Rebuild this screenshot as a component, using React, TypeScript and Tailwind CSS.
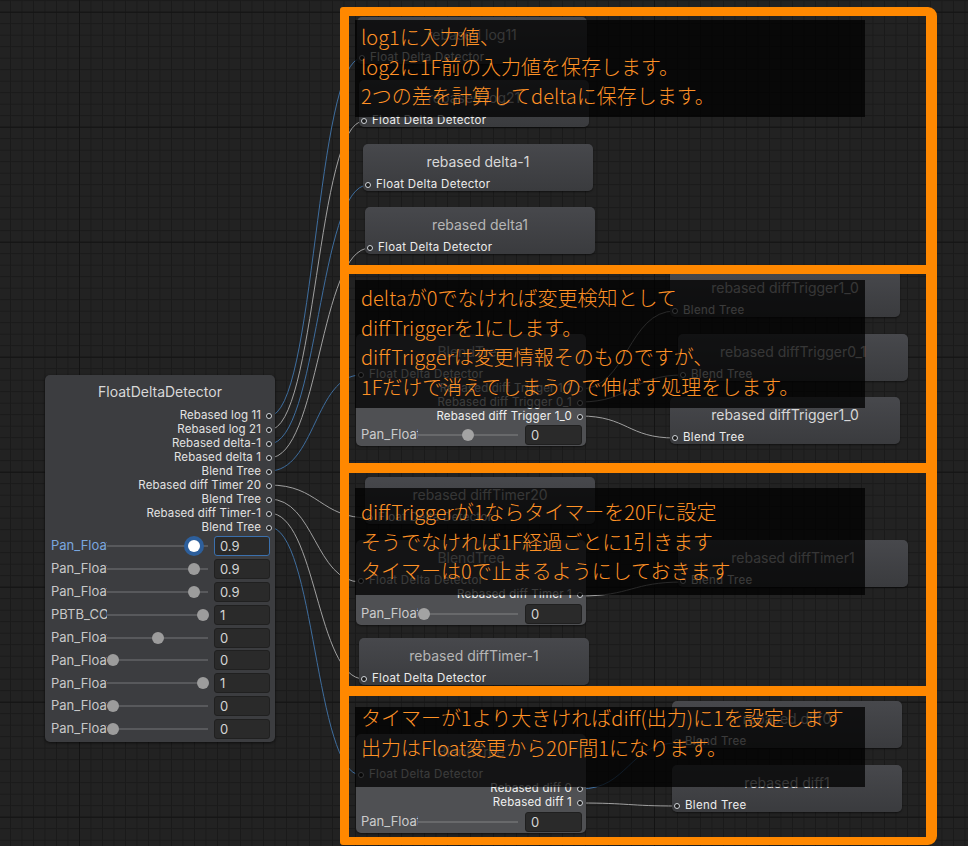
import React from "react"

type P = [number, number]

const BLUE = "#3e6d9e"
const GRAY = "#a0a0a0"

// bezier between two ports, same as the graph view draws them
const curve = (a: P, b: P) => {
  const d = Math.max(30, Math.abs(b[0] - a[0]) * 0.5)
  return `M${a[0]} ${a[1]} C${a[0] + d} ${a[1]} ${b[0] - d} ${b[1]} ${b[0]} ${b[1]}`
}

const wires: { a: P; b: P; c: string }[] = [
  { a: [269, 416], b: [362, 58], c: BLUE },
  { a: [269, 430], b: [364, 121], c: GRAY },
  { a: [269, 444], b: [368, 185], c: BLUE },
  { a: [269, 458], b: [370, 248], c: GRAY },
  { a: [269, 471], b: [361, 375], c: BLUE },
  { a: [269, 485], b: [370, 518], c: GRAY },
  { a: [269, 499], b: [361, 582], c: GRAY },
  { a: [269, 513], b: [364, 679], c: GRAY },
  { a: [269, 527], b: [361, 775], c: BLUE },
  { a: [580, 389], b: [675, 311], c: GRAY },
  { a: [580, 402], b: [683, 375], c: GRAY },
  { a: [580, 416], b: [675, 438], c: GRAY },
  { a: [580, 596], b: [683, 582], c: GRAY },
  { a: [580, 789], b: [677, 743], c: BLUE },
  { a: [580, 803], b: [677, 806], c: GRAY },
]

const Dot = () => (
  <span className="w-[6px] h-[6px] shrink-0 rounded-full border border-[#cfd3d8] bg-[#1b1b1b]" />
)

const Target = ({ pos, title, port, dim }: { pos: string; title: string; port: string; dim?: boolean }) => (
  <div className={`absolute ${pos} w-[230px] h-[47px] rounded-[5px] bg-linear-to-b from-[#47484c] to-[#3a3b3e] shadow-[0_1px_2px_rgba(0,0,0,0.5)] flex flex-col`}>
    <div className={`h-[34px] flex items-center justify-center text-[14px] ${dim ? "text-[#b6b6b6]" : "text-[#d8d8d8]"}`}>
      {title}
    </div>
    <div className="h-[13px] flex items-center gap-[5px] pl-[2px] text-[11.5px] tracking-[0.3px] text-[#ececec]">
      <Dot />
      <span>{port}</span>
    </div>
  </div>
)

const Blend = ({ pos, outs, knob, gap }: { pos: string; outs: string[]; knob?: number; gap: string }) => (
  <div className={`absolute ${pos} w-[230px] rounded-[5px] bg-[#4f5053] shadow-[0_1px_2px_rgba(0,0,0,0.5)] flex flex-col pb-[1px]`}>
    <div className="h-[34px] flex items-center justify-center text-[14px] text-[#d8d8d8]">BlendTree</div>
    <div className="h-[14px] flex items-center gap-[5px] pl-[2px] text-[11.5px] tracking-[0.3px] text-[#ececec]">
      <Dot />
      <span>Float Delta Detector</span>
    </div>
    {outs.map((o, i) => (
      <div key={i} className="h-[14px] flex items-center justify-end gap-[5px] pr-[3px] text-[11.5px] tracking-[0.2px] text-[#f0f0f0]">
        <span>{o}</span>
        <Dot />
      </div>
    ))}
    <div className={`${gap} h-[20px] flex items-center pl-[5px] pr-[4px]`}>
      <div className="w-[57px] overflow-hidden whitespace-nowrap text-[13px] text-[#cbcbcb]">Pan_FloatDelta</div>
      <div className="relative w-[100px] h-[20px]">
        <div className="absolute left-0 right-0 top-[9px] h-[2px] bg-[#68696b]" />
        {knob !== undefined && (
          <div
            className="absolute top-[4px] w-[12px] h-[12px] rounded-full bg-[#a3a3a3]"
            style={{ left: 6 + knob * 88 - 6 }}
          />
        )}
      </div>
      <div className="ml-[7px] w-[57px] h-[20px] rounded-[3px] bg-[#2a2a2a] border border-[#1f1f1f] px-[5px] text-[13px] leading-[18px] text-[#d4d4d4]">
        0
      </div>
    </div>
  </div>
)

const params = [
  { label: "Pan_FloatDelta", v: "0.9", k: 0.9, focus: true },
  { label: "Pan_FloatDelta", v: "0.9", k: 0.9 },
  { label: "Pan_FloatDelta", v: "0.9", k: 0.9 },
  { label: "PBTB_CONST", v: "1", k: 1 },
  { label: "Pan_FloatDelta", v: "0", k: 0.5 },
  { label: "Pan_FloatDelta", v: "0", k: 0 },
  { label: "Pan_FloatDelta", v: "1", k: 1 },
  { label: "Pan_FloatDelta", v: "0", k: 0 },
  { label: "Pan_FloatDelta", v: "0", k: 0 },
]

const outputs = [
  "Rebased log 11",
  "Rebased log 21",
  "Rebased delta-1",
  "Rebased delta 1",
  "Blend Tree",
  "Rebased diff Timer 20",
  "Blend Tree",
  "Rebased diff Timer-1",
  "Blend Tree",
]

const Note = ({ pos, lines, inner }: { pos: string; lines: string[]; inner: string }) => (
  <div className={`absolute ${pos} w-[510px] bg-black/75 pl-[6px] whitespace-nowrap`}>
    <div className={`${inner} font-['Noto_Sans_CJK_JP',sans-serif] font-light text-[20px] leading-[29.6px] text-[#ff9226]`}>
      {lines.map((l) => (
        <div key={l}>{l}</div>
      ))}
    </div>
  </div>
)

export default function App() {
  return (
    <div className="relative w-[968px] h-[846px] overflow-hidden bg-[#222222] font-['Inter',sans-serif]">
      <svg className="absolute inset-0" width={968} height={846}>
        <defs>
          <pattern id="minor" width="11.5" height="11.5" patternUnits="userSpaceOnUse" x="79" y="11.7">
            <rect width="11.5" height="1" fill="#1a1a1a" />
            <rect width="1" height="11.5" fill="#1a1a1a" />
          </pattern>
          <pattern id="major" width="115" height="115" patternUnits="userSpaceOnUse" x="79" y="11.7">
            <rect width="115" height="1" fill="#131313" />
            <rect width="1" height="115" fill="#131313" />
          </pattern>
        </defs>
        <rect width="968" height="846" fill="url(#minor)" />
        <rect width="968" height="846" fill="url(#major)" />
        {wires.map((w, i) => (
          <path key={i} d={curve(w.a, w.b)} fill="none" stroke={w.c} strokeWidth={1} />
        ))}
      </svg>

      {/* left node */}
      <div className="absolute left-[45px] top-[375px] w-[230px] h-[367px] rounded-[5px] bg-[#3c3d40] shadow-[0_1px_3px_rgba(0,0,0,0.6)] flex flex-col">
        <div className="h-[32px] flex items-center justify-center text-[14px] text-[#d8d8d8]">FloatDeltaDetector</div>
        <div className="pt-[2px] flex flex-col">
          {outputs.map((o, i) => (
            <div key={i} className="h-[14px] flex items-center justify-end gap-[5px] pr-[3px] text-[11.5px] tracking-[0.1px] text-[#e2e2e2]">
              <span>{o}</span>
              <Dot />
            </div>
          ))}
        </div>
        <div className="mt-[1px] flex flex-col gap-[2.875px]">
          {params.map((p, i) => (
            <div key={i} className="h-[20px] flex items-center pl-[6px] pr-[5px]">
              <div
                className={`w-[56px] overflow-hidden whitespace-nowrap text-[13px] ${p.focus ? "text-[#7aa6de]" : "text-[#c8c8c8]"}`}
              >
                {p.label}
              </div>
              <div className="relative w-[101px] h-[20px]">
                <div className="absolute left-0 right-0 top-[9px] h-[2px] bg-[#58595c]" />
                {p.focus ? (
                  <div
                    className="absolute top-[4px] w-[12px] h-[12px] rounded-full bg-white ring-[4px] ring-[#2d5f9c]"
                    style={{ left: 6 + p.k * 90 - 6 }}
                  />
                ) : (
                  <div
                    className="absolute top-[4px] w-[12px] h-[12px] rounded-full bg-[#9c9c9c]"
                    style={{ left: 6 + p.k * 90 - 6 }}
                  />
                )}
              </div>
              <div
                className={`ml-[6px] w-[56px] h-[20px] rounded-[3px] bg-[#2a2a2a] border px-[5px] text-[13px] leading-[18px] text-[#d4d4d4] ${p.focus ? "border-[#3b70ad]" : "border-[#202020]"}`}
              >
                {p.v}
              </div>
            </div>
          ))}
        </div>
      </div>

      {/* box 1 */}
      <Target pos="left-[357px] top-[17px]" title="rebased log11" port="Float Delta Detector" />
      <Target pos="left-[359px] top-[80px]" title="rebased log21" port="Float Delta Detector" />
      <Target pos="left-[363px] top-[144px]" title="rebased delta-1" port="Float Delta Detector" />
      <Target pos="left-[365px] top-[207px]" title="rebased delta1" port="Float Delta Detector" dim />

      {/* box 2 */}
      <Target pos="left-[670px] top-[270px]" title="rebased diffTrigger1_0" port="Blend Tree" />
      <Target pos="left-[678px] top-[334px]" title="rebased diffTrigger0_1" port="Blend Tree" />
      <Target pos="left-[670px] top-[397px]" title="rebased diffTrigger1_0" port="Blend Tree" />
      <Blend
        pos="left-[356px] top-[334px]"
        outs={["Rebased diff Trigger 1_1", "Rebased diff Trigger 0_1", "Rebased diff Trigger 1_0"]}
        knob={0.5}
        gap="mt-[1px]"
      />

      {/* box 3 */}
      <Target pos="left-[365px] top-[477px]" title="rebased diffTimer20" port="Float Delta Detector" />
      <Blend pos="left-[356px] top-[540px]" outs={["Rebased diff Timer 1"]} knob={0} gap="mt-[2px]" />
      <Target pos="left-[359px] top-[638px]" title="rebased diffTimer-1" port="Float Delta Detector" dim />
      <Target pos="left-[678px] top-[540px]" title="rebased diffTimer1" port="Blend Tree" />

      {/* box 4 */}
      <Target pos="left-[672px] top-[701px]" title="rebased diff0" port="Blend Tree" />
      <Target pos="left-[672px] top-[765px]" title="rebased diff1" port="Blend Tree" />
      <Blend pos="left-[356px] top-[734px]" outs={["Rebased diff 0", "Rebased diff 1"]} gap="mt-[2px]" />

      {/* notes */}
      <Note
        pos="left-[355px] top-[20px] h-[97px]"
        inner="pt-[2px]"
        lines={["log1に入力値、", "log2に1F前の入力値を保存します。", "2つの差を計算してdeltaに保存します。"]}
      />
      <Note
        pos="left-[355px] top-[280px] h-[128px]"
        inner="pt-[3px]"
        lines={[
          "deltaが0でなければ変更検知として",
          "diffTriggerを1にします。",
          "diffTriggerは変更情報そのものですが、",
          "1Fだけで消えてしまうので伸ばす処理をします。",
        ]}
      />
      <Note
        pos="left-[355px] top-[488px] h-[107px]"
        inner="pt-[9px]"
        lines={[
          "diffTriggerが1ならタイマーを20Fに設定",
          "そうでなければ1F経過ごとに1引きます",
          "タイマーは0で止まるようにしておきます",
        ]}
      />
      <Note
        pos="left-[355px] top-[707px] h-[80px]"
        inner="-mt-[4px]"
        lines={["タイマーが1より大きければdiff(出力)に1を設定します", "出力はFloat変更から20F間1になります。"]}
      />

      {/* orange frames */}
      <div className="absolute left-[340px] top-[7px] w-[597px] h-[263px] border-[#ff8800] border-t-[9px] border-l-[9px] border-r-[11px] border-b-[5px] rounded-tr-[9px] rounded-tl-[3px]" />
      <div className="absolute left-[340px] top-[270px] w-[597px] h-[198px] border-[#ff8800] border-t-[4px] border-l-[9px] border-r-[11px] border-b-[5px]" />
      <div className="absolute left-[340px] top-[468px] w-[597px] h-[223px] border-[#ff8800] border-t-[5px] border-l-[9px] border-r-[11px] border-b-[5px]" />
      <div className="absolute left-[340px] top-[691px] w-[597px] h-[154px] border-[#ff8800] border-t-[5px] border-l-[9px] border-r-[11px] border-b-[8px] rounded-br-[9px] rounded-bl-[3px]" />
    </div>
  )
}
